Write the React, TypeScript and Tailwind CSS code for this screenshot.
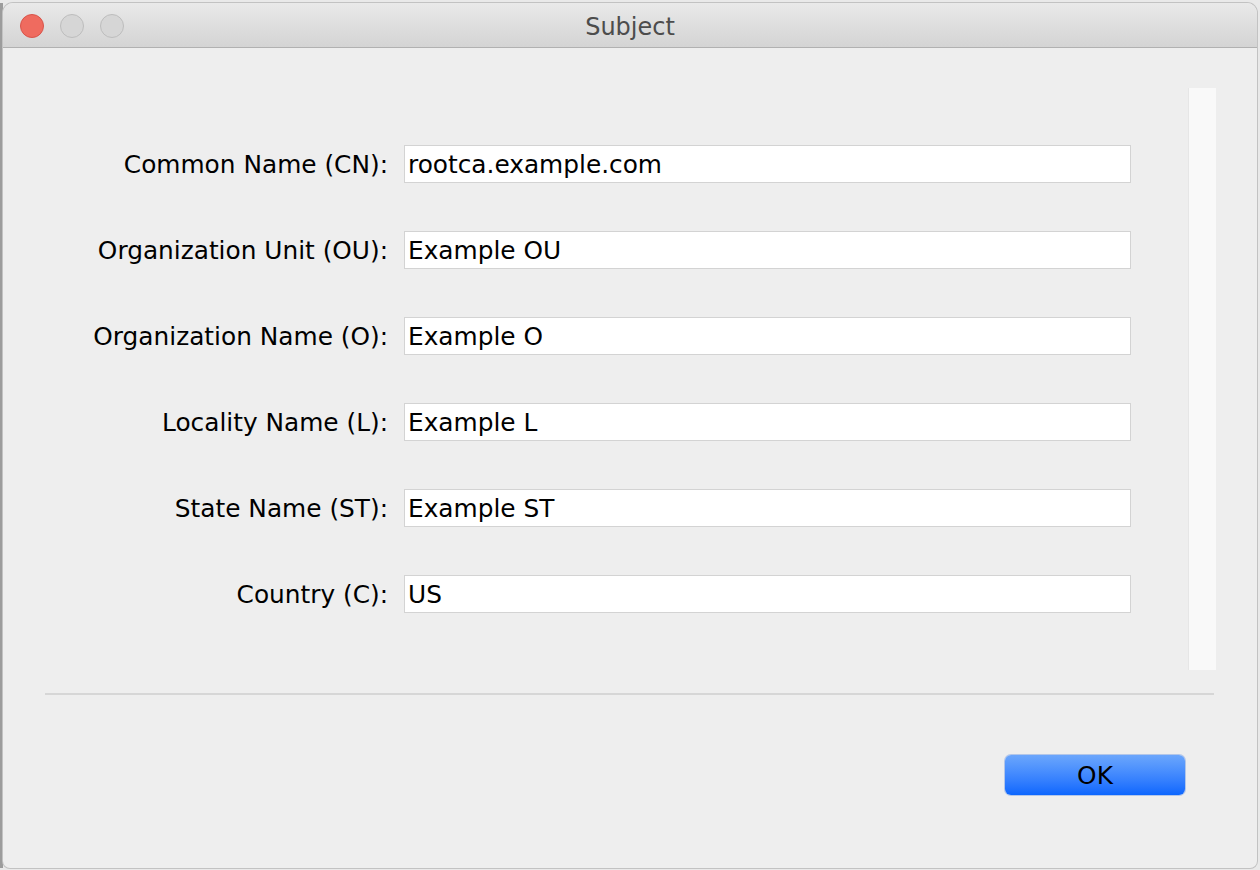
import React from "react";

const rows: [string, string][] = [
  ["Common Name (CN):", "rootca.example.com"],
  ["Organization Unit (OU):", "Example OU"],
  ["Organization Name (O):", "Example O"],
  ["Locality Name (L):", "Example L"],
  ["State Name (ST):", "Example ST"],
  ["Country (C):", "US"],
];

const font = { fontFamily: '"DejaVu Sans", "Liberation Sans", sans-serif' };

export default function App() {
  return (
    <div
      className="w-[1260px] h-[870px] bg-[#e9e9e9] overflow-hidden flex flex-col"
      style={font}
    >
      <div className="flex flex-1 pt-[3px] pb-[2px]">
        <div className="w-[3px] bg-[#9c9c9c]" />
        <div className="flex-1 flex flex-col bg-[#eeeeee] rounded-t-[10px] rounded-b-[7px] shadow-[0_0_0_1px_#c2c2c2] overflow-hidden mr-[3px]">
          {/* title bar */}
          <div className="h-[45px] shrink-0 relative flex items-center justify-center pt-[4px] bg-gradient-to-b from-[#e9e9e9] to-[#d4d4d4] border-b border-[#b1b1b1]">
            <div className="absolute left-[17px] top-[11px] flex gap-[16px]">
              <span className="w-[24px] h-[24px] rounded-full bg-[#ef6b5f] border border-[#d8544a]" />
              <span className="w-[24px] h-[24px] rounded-full bg-[#d6d6d6] border border-[#bdbdbd]" />
              <span className="w-[24px] h-[24px] rounded-full bg-[#d6d6d6] border border-[#bdbdbd]" />
            </div>
            <span className="text-[24px] text-[#4c4c4c] leading-none">Subject</span>
          </div>
          {/* body */}
          <div className="flex-1 flex flex-col pl-[42px] pr-[41px] pt-[40px]">
            <div className="flex h-[582px]">
              <div className="flex-1 flex flex-col justify-center gap-[48px]">
                {rows.map(([label, value]) => (
                  <div key={label} className="flex items-center h-[38px]">
                    <div className="w-[343px] text-right text-[24.8px] text-black leading-none pt-[2px]">
                      {label}
                    </div>
                    <div className="ml-[16px] w-[727px] h-[38px] bg-white border border-[#d3d3d3] flex items-center pl-[3px] pt-[2px] text-[24.8px] text-black leading-none">
                      {value}
                    </div>
                  </div>
                ))}
              </div>
              <div className="w-[28px] bg-[#f9f9f9] border-l border-[#e6e6e6]" />
            </div>
            <div className="mt-[23px] h-[2px] bg-[#d6d6d6] mr-[2px]" />
            <div className="flex justify-end mt-[60px] pr-[31px]">
              <button className="w-[180px] h-[40px] rounded-[6px] bg-gradient-to-b from-[#6ba6fc] to-[#0a66fe] shadow-[0_0_0_1px_rgba(0,80,220,0.25)] text-[24.8px] text-black leading-none flex items-center justify-center pt-[2px]">
                OK
              </button>
            </div>
          </div>
        </div>
      </div>
    </div>
  );
}
